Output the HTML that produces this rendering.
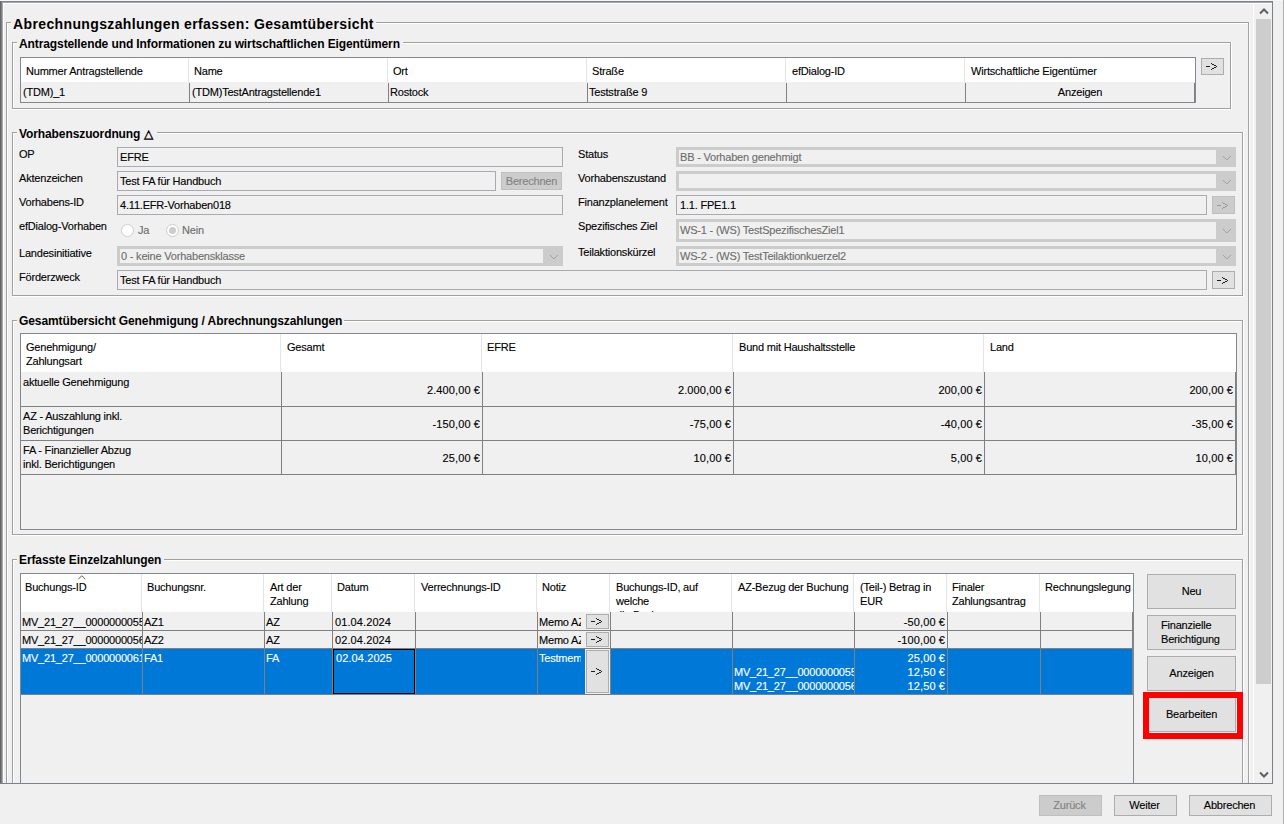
<!DOCTYPE html>
<html><head><meta charset="utf-8"><title>Abrechnungszahlungen erfassen</title>
<style>
html,body{margin:0;padding:0;}
body{width:1284px;height:824px;overflow:hidden;background:#f0f0f0;position:relative;font-family:"Liberation Sans",sans-serif;}
body div, body span, body svg{position:absolute;}
.t{font:11px/13px "Liberation Sans",sans-serif;letter-spacing:-0.2px;white-space:nowrap;color:#000;-webkit-text-stroke:0.12px currentColor;}
.b12{font:bold 12px/14px "Liberation Sans",sans-serif;letter-spacing:-0.1px;white-space:nowrap;color:#000;}
.b14{font:bold 14px/16px "Liberation Sans",sans-serif;letter-spacing:0.37px;white-space:nowrap;color:#000;}
.n{letter-spacing:0.1px;}
.dis{color:#6d6d6d;}
.dis2{color:#838383;}
.w{color:#fff;}
.clip{overflow:hidden;}
</style></head><body>

<div style="left:0px;top:0px;width:1283px;height:1px;background:#f6f6f6"></div>
<div style="left:0px;top:1px;width:1273px;height:1px;background:#7f848b"></div>
<div style="left:1px;top:2px;width:1272px;height:1px;background:#a4a8ae"></div>
<div style="left:0px;top:1px;width:1px;height:783px;background:#666666"></div>
<div style="left:1px;top:1px;width:1px;height:783px;background:#7b8089"></div>
<div style="left:2px;top:2px;width:1px;height:782px;background:#a8a8a8"></div>
<div style="left:3px;top:3px;width:1269px;height:1px;background:#ffffff"></div>
<div style="left:3px;top:3px;width:1px;height:780px;background:#ffffff"></div>
<div style="left:1272px;top:1px;width:1px;height:783px;background:#7b8089"></div>
<div style="left:0px;top:783px;width:1273px;height:1px;background:#7b8089"></div>
<div style="left:1283px;top:0px;width:1px;height:824px;background:#b0b0b0"></div>
<div style="left:7px;top:23px;width:1243px;height:1px;background:#ffffff"></div>
<div style="left:7px;top:23px;width:1px;height:779px;background:#ffffff"></div>
<div style="left:1249px;top:22px;width:1px;height:780px;background:#ffffff"></div>
<div style="left:6px;top:801px;width:1244px;height:1px;background:#ffffff"></div>
<div style="left:6px;top:22px;width:1243px;height:1px;background:#a0a0a0"></div>
<div style="left:6px;top:22px;width:1px;height:779px;background:#a0a0a0"></div>
<div style="left:1248px;top:22px;width:1px;height:779px;background:#a0a0a0"></div>
<div style="left:6px;top:800px;width:1243px;height:1px;background:#a0a0a0"></div>
<div style="left:11px;top:22px;width:365px;height:2px;background:#f0f0f0"></div>
<span class="b14" style="left:13px;top:16px;">Abrechnungszahlungen erfassen: Gesamtübersicht</span>
<div style="left:13px;top:43px;width:1219px;height:1px;background:#ffffff"></div>
<div style="left:13px;top:43px;width:1px;height:67px;background:#ffffff"></div>
<div style="left:1231px;top:42px;width:1px;height:68px;background:#ffffff"></div>
<div style="left:12px;top:109px;width:1220px;height:1px;background:#ffffff"></div>
<div style="left:12px;top:42px;width:1219px;height:1px;background:#a0a0a0"></div>
<div style="left:12px;top:42px;width:1px;height:67px;background:#a0a0a0"></div>
<div style="left:1230px;top:42px;width:1px;height:67px;background:#a0a0a0"></div>
<div style="left:12px;top:108px;width:1219px;height:1px;background:#a0a0a0"></div>
<div style="left:17px;top:42px;width:386px;height:2px;background:#f0f0f0"></div>
<span class="b12" style="left:19px;top:37px;">Antragstellende und Informationen zu wirtschaftlichen Eigentümern</span>
<div style="left:20px;top:57px;width:1176px;height:46px;box-sizing:border-box;border:1px solid #828790;background:#f0f0f0"></div>
<div style="left:21px;top:58px;width:1174px;height:24px;background:#ffffff"></div>
<div style="left:188px;top:58px;width:1px;height:24px;background:#e5e5e5"></div>
<div style="left:387px;top:58px;width:1px;height:24px;background:#e5e5e5"></div>
<div style="left:586px;top:58px;width:1px;height:24px;background:#e5e5e5"></div>
<div style="left:785px;top:58px;width:1px;height:24px;background:#e5e5e5"></div>
<div style="left:964px;top:58px;width:1px;height:24px;background:#e5e5e5"></div>
<div style="left:189px;top:83px;width:1px;height:19px;background:#808080"></div>
<div style="left:388px;top:83px;width:1px;height:19px;background:#808080"></div>
<div style="left:587px;top:83px;width:1px;height:19px;background:#808080"></div>
<div style="left:786px;top:83px;width:1px;height:19px;background:#808080"></div>
<div style="left:965px;top:83px;width:1px;height:19px;background:#808080"></div>
<div style="left:1194px;top:83px;width:1px;height:19px;background:#808080"></div>
<span class="t" style="left:26px;top:65px;">Nummer Antragstellende</span>
<span class="t" style="left:194px;top:65px;">Name</span>
<span class="t" style="left:393px;top:65px;">Ort</span>
<span class="t" style="left:592px;top:65px;">Straße</span>
<span class="t" style="left:792px;top:65px;">efDialog-ID</span>
<span class="t" style="left:971px;top:65px;">Wirtschaftliche Eigentümer</span>
<span class="t" style="left:23px;top:86px;">(TDM)_1</span>
<span class="t" style="left:192px;top:86px;">(TDM)TestAntragstellende1</span>
<span class="t" style="left:390px;top:86px;">Rostock</span>
<span class="t" style="left:589px;top:86px;">Teststraße 9</span>
<span class="t" style="left:966px;width:228px;text-align:center;top:86px;">Anzeigen</span>
<div style="left:1201px;top:58px;width:23px;height:17px;box-sizing:border-box;border:1px solid #adadad;background:#e1e1e1"></div>
<div style="left:1206px;top:66px;width:4px;height:1px;background:#1e1e1e"></div>
<div style="left:1211px;top:63px;width:1px;height:1px;background:#1e1e1e"></div>
<div style="left:1212px;top:64px;width:2px;height:1px;background:#1e1e1e"></div>
<div style="left:1214px;top:65px;width:2px;height:1px;background:#1e1e1e"></div>
<div style="left:1216px;top:66px;width:1px;height:1px;background:#1e1e1e"></div>
<div style="left:1214px;top:67px;width:2px;height:1px;background:#1e1e1e"></div>
<div style="left:1212px;top:68px;width:2px;height:1px;background:#1e1e1e"></div>
<div style="left:1211px;top:69px;width:1px;height:1px;background:#1e1e1e"></div>
<div style="left:13px;top:133px;width:1231px;height:1px;background:#ffffff"></div>
<div style="left:13px;top:133px;width:1px;height:164px;background:#ffffff"></div>
<div style="left:1243px;top:132px;width:1px;height:165px;background:#ffffff"></div>
<div style="left:12px;top:296px;width:1232px;height:1px;background:#ffffff"></div>
<div style="left:12px;top:132px;width:1231px;height:1px;background:#a0a0a0"></div>
<div style="left:12px;top:132px;width:1px;height:164px;background:#a0a0a0"></div>
<div style="left:1242px;top:132px;width:1px;height:164px;background:#a0a0a0"></div>
<div style="left:12px;top:295px;width:1231px;height:1px;background:#a0a0a0"></div>
<div style="left:17px;top:132px;width:140px;height:2px;background:#f0f0f0"></div>
<span class="b12" style="left:19px;top:127px;">Vorhabenszuordnung △</span>
<span class="t" style="left:19px;top:148px;">OP</span>
<span class="t" style="left:19px;top:172px;">Aktenzeichen</span>
<span class="t" style="left:19px;top:196px;">Vorhabens-ID</span>
<span class="t" style="left:19px;top:220px;">efDialog-Vorhaben</span>
<span class="t" style="left:19px;top:247px;">Landesinitiative</span>
<span class="t" style="left:19px;top:271px;">Förderzweck</span>
<div style="left:117px;top:147px;width:446px;height:20px;box-sizing:border-box;border:1px solid #a9abb3;background:#f0f0f0"></div>
<span class="t" style="left:120px;top:151px;">EFRE</span>
<div style="left:117px;top:171px;width:379px;height:20px;box-sizing:border-box;border:1px solid #a9abb3;background:#f0f0f0"></div>
<span class="t" style="left:120px;top:175px;">Test FA für Handbuch</span>
<div style="left:501px;top:172px;width:61px;height:18px;box-sizing:border-box;border:1px solid #bfbfbf;background:#cccccc"></div>
<span class="t dis2" style="left:501px;width:61px;text-align:center;top:175px;">Berechnen</span>
<div style="left:117px;top:195px;width:446px;height:20px;box-sizing:border-box;border:1px solid #a9abb3;background:#f0f0f0"></div>
<span class="t" style="left:120px;top:199px;">4.11.EFR-Vorhaben018</span>
<svg style="left:121px;top:224px" width="13" height="13" viewBox="0 0 13 13"><circle cx="6.5" cy="6.5" r="6" fill="#fff" stroke="#cccccc" stroke-width="1"/></svg>
<span class="t dis" style="left:138px;top:224px;">Ja</span>
<svg style="left:166px;top:224px" width="13" height="13" viewBox="0 0 13 13"><circle cx="6.5" cy="6.5" r="6" fill="#fff" stroke="#cccccc" stroke-width="1"/><circle cx="6.5" cy="6.5" r="3.5" fill="#cccccc"/></svg>
<span class="t dis" style="left:182px;top:224px;">Nein</span>
<div style="left:117px;top:246px;width:446px;height:20px;background:#cccccc"></div>
<div style="left:120px;top:249px;width:423px;height:14px;background:#f0f0f0"></div>
<svg style="left:549px;top:254px" width="10" height="7" viewBox="0 0 10 7"><path d="M0.9 1 L4.9 5 L8.9 1" fill="none" stroke="#a0a0a0" stroke-width="1"/></svg>
<span class="t dis" style="left:121px;top:250px;">0 - keine Vorhabensklasse</span>
<div style="left:117px;top:270px;width:1090px;height:20px;box-sizing:border-box;border:1px solid #a9abb3;background:#f0f0f0"></div>
<span class="t" style="left:120px;top:274px;">Test FA für Handbuch</span>
<div style="left:1212px;top:271px;width:23px;height:18px;box-sizing:border-box;border:1px solid #adadad;background:#e1e1e1"></div>
<div style="left:1217px;top:280px;width:4px;height:1px;background:#1e1e1e"></div>
<div style="left:1222px;top:277px;width:1px;height:1px;background:#1e1e1e"></div>
<div style="left:1223px;top:278px;width:2px;height:1px;background:#1e1e1e"></div>
<div style="left:1225px;top:279px;width:2px;height:1px;background:#1e1e1e"></div>
<div style="left:1227px;top:280px;width:1px;height:1px;background:#1e1e1e"></div>
<div style="left:1225px;top:281px;width:2px;height:1px;background:#1e1e1e"></div>
<div style="left:1223px;top:282px;width:2px;height:1px;background:#1e1e1e"></div>
<div style="left:1222px;top:283px;width:1px;height:1px;background:#1e1e1e"></div>
<span class="t" style="left:578px;top:148px;">Status</span>
<span class="t" style="left:578px;top:172px;">Vorhabenszustand</span>
<span class="t" style="left:578px;top:196px;">Finanzplanelement</span>
<span class="t" style="left:578px;top:220px;">Spezifisches Ziel</span>
<span class="t" style="left:578px;top:246px;">Teilaktionskürzel</span>
<div style="left:676px;top:147px;width:560px;height:20px;background:#cccccc"></div>
<div style="left:679px;top:150px;width:537px;height:14px;background:#f0f0f0"></div>
<svg style="left:1222px;top:155px" width="10" height="7" viewBox="0 0 10 7"><path d="M0.9 1 L4.9 5 L8.9 1" fill="none" stroke="#a0a0a0" stroke-width="1"/></svg>
<span class="t dis" style="left:680px;top:151px;">BB - Vorhaben genehmigt</span>
<div style="left:676px;top:171px;width:560px;height:20px;background:#cccccc"></div>
<div style="left:679px;top:174px;width:537px;height:14px;background:#f0f0f0"></div>
<svg style="left:1222px;top:179px" width="10" height="7" viewBox="0 0 10 7"><path d="M0.9 1 L4.9 5 L8.9 1" fill="none" stroke="#a0a0a0" stroke-width="1"/></svg>
<div style="left:676px;top:195px;width:531px;height:20px;box-sizing:border-box;border:1px solid #a9abb3;background:#f0f0f0"></div>
<span class="t" style="left:680px;top:199px;">1.1. FPE1.1</span>
<div style="left:1212px;top:196px;width:23px;height:18px;box-sizing:border-box;border:1px solid #bfbfbf;background:#cccccc"></div>
<div style="left:1217px;top:205px;width:4px;height:1px;background:#9a9a9a"></div>
<div style="left:1222px;top:202px;width:1px;height:1px;background:#9a9a9a"></div>
<div style="left:1223px;top:203px;width:2px;height:1px;background:#9a9a9a"></div>
<div style="left:1225px;top:204px;width:2px;height:1px;background:#9a9a9a"></div>
<div style="left:1227px;top:205px;width:1px;height:1px;background:#9a9a9a"></div>
<div style="left:1225px;top:206px;width:2px;height:1px;background:#9a9a9a"></div>
<div style="left:1223px;top:207px;width:2px;height:1px;background:#9a9a9a"></div>
<div style="left:1222px;top:208px;width:1px;height:1px;background:#9a9a9a"></div>
<div style="left:676px;top:219px;width:560px;height:23px;background:#cccccc"></div>
<div style="left:679px;top:222px;width:537px;height:17px;background:#f0f0f0"></div>
<svg style="left:1222px;top:228px" width="10" height="7" viewBox="0 0 10 7"><path d="M0.9 1 L4.9 5 L8.9 1" fill="none" stroke="#a0a0a0" stroke-width="1"/></svg>
<span class="t dis" style="left:680px;top:224px;">WS-1 - (WS) TestSpezifischesZiel1</span>
<div style="left:676px;top:246px;width:560px;height:20px;background:#cccccc"></div>
<div style="left:679px;top:249px;width:537px;height:14px;background:#f0f0f0"></div>
<svg style="left:1222px;top:254px" width="10" height="7" viewBox="0 0 10 7"><path d="M0.9 1 L4.9 5 L8.9 1" fill="none" stroke="#a0a0a0" stroke-width="1"/></svg>
<span class="t dis" style="left:680px;top:250px;">WS-2 - (WS) TestTeilaktionkuerzel2</span>
<div style="left:13px;top:321px;width:1231px;height:1px;background:#ffffff"></div>
<div style="left:13px;top:321px;width:1px;height:215px;background:#ffffff"></div>
<div style="left:1243px;top:320px;width:1px;height:216px;background:#ffffff"></div>
<div style="left:12px;top:535px;width:1232px;height:1px;background:#ffffff"></div>
<div style="left:12px;top:320px;width:1231px;height:1px;background:#a0a0a0"></div>
<div style="left:12px;top:320px;width:1px;height:215px;background:#a0a0a0"></div>
<div style="left:1242px;top:320px;width:1px;height:215px;background:#a0a0a0"></div>
<div style="left:12px;top:534px;width:1231px;height:1px;background:#a0a0a0"></div>
<div style="left:17px;top:320px;width:327px;height:2px;background:#f0f0f0"></div>
<span class="b12" style="left:19px;top:314px;">Gesamtübersicht Genehmigung / Abrechnungszahlungen</span>
<div style="left:20px;top:333px;width:1217px;height:197px;box-sizing:border-box;border:1px solid #828790;background:#f0f0f0"></div>
<div style="left:21px;top:334px;width:1215px;height:38px;background:#ffffff"></div>
<div style="left:280px;top:334px;width:1px;height:38px;background:#e5e5e5"></div>
<div style="left:481px;top:334px;width:1px;height:38px;background:#e5e5e5"></div>
<div style="left:732px;top:334px;width:1px;height:38px;background:#e5e5e5"></div>
<div style="left:983px;top:334px;width:1px;height:38px;background:#e5e5e5"></div>
<div style="left:281px;top:372px;width:1px;height:103px;background:#808080"></div>
<div style="left:482px;top:372px;width:1px;height:103px;background:#808080"></div>
<div style="left:733px;top:372px;width:1px;height:103px;background:#808080"></div>
<div style="left:984px;top:372px;width:1px;height:103px;background:#808080"></div>
<div style="left:1235px;top:372px;width:1px;height:103px;background:#808080"></div>
<div style="left:21px;top:406px;width:1215px;height:1px;background:#808080"></div>
<div style="left:21px;top:440px;width:1215px;height:1px;background:#808080"></div>
<div style="left:21px;top:474px;width:1215px;height:1px;background:#808080"></div>
<span class="t" style="left:26px;top:341px;">Genehmigung/</span>
<span class="t" style="left:26px;top:355px;">Zahlungsart</span>
<span class="t" style="left:287px;top:341px;">Gesamt</span>
<span class="t" style="left:487px;top:341px;">EFRE</span>
<span class="t" style="left:739px;top:341px;">Bund mit Haushaltsstelle</span>
<span class="t" style="left:990px;top:341px;">Land</span>
<span class="t" style="left:23px;top:376px;">aktuelle Genehmigung</span>
<span class="t" style="left:23px;top:410px;">AZ - Auszahlung inkl.</span>
<span class="t" style="left:23px;top:424px;">Berichtigungen</span>
<span class="t" style="left:23px;top:444px;">FA - Finanzieller Abzug</span>
<span class="t" style="left:23px;top:458px;">inkl. Berichtigungen</span>
<span class="t n" style="right:804px;top:384px;">2.400,00 €</span>
<span class="t n" style="right:553px;top:384px;">2.000,00 €</span>
<span class="t n" style="right:302px;top:384px;">200,00 €</span>
<span class="t n" style="right:51px;top:384px;">200,00 €</span>
<span class="t n" style="right:804px;top:418px;">-150,00 €</span>
<span class="t n" style="right:553px;top:418px;">-75,00 €</span>
<span class="t n" style="right:302px;top:418px;">-40,00 €</span>
<span class="t n" style="right:51px;top:418px;">-35,00 €</span>
<span class="t n" style="right:804px;top:452px;">25,00 €</span>
<span class="t n" style="right:553px;top:452px;">10,00 €</span>
<span class="t n" style="right:302px;top:452px;">5,00 €</span>
<span class="t n" style="right:51px;top:452px;">10,00 €</span>
<div style="left:13px;top:560px;width:1231px;height:1px;background:#ffffff"></div>
<div style="left:13px;top:560px;width:1px;height:342px;background:#ffffff"></div>
<div style="left:1243px;top:559px;width:1px;height:343px;background:#ffffff"></div>
<div style="left:12px;top:901px;width:1232px;height:1px;background:#ffffff"></div>
<div style="left:12px;top:559px;width:1231px;height:1px;background:#a0a0a0"></div>
<div style="left:12px;top:559px;width:1px;height:342px;background:#a0a0a0"></div>
<div style="left:1242px;top:559px;width:1px;height:342px;background:#a0a0a0"></div>
<div style="left:12px;top:900px;width:1231px;height:1px;background:#a0a0a0"></div>
<div style="left:17px;top:559px;width:147px;height:2px;background:#f0f0f0"></div>
<span class="b12" style="left:19px;top:553px;">Erfasste Einzelzahlungen</span>
<div style="left:20px;top:573px;width:1114px;height:328px;box-sizing:border-box;border:1px solid #828790;background:#f0f0f0"></div>
<div style="left:21px;top:574px;width:1112px;height:38px;background:#ffffff"></div>
<div style="left:141px;top:574px;width:1px;height:38px;background:#e5e5e5"></div>
<div style="left:263px;top:574px;width:1px;height:38px;background:#e5e5e5"></div>
<div style="left:331px;top:574px;width:1px;height:38px;background:#e5e5e5"></div>
<div style="left:414px;top:574px;width:1px;height:38px;background:#e5e5e5"></div>
<div style="left:536px;top:574px;width:1px;height:38px;background:#e5e5e5"></div>
<div style="left:609px;top:574px;width:1px;height:38px;background:#e5e5e5"></div>
<div style="left:731px;top:574px;width:1px;height:38px;background:#e5e5e5"></div>
<div style="left:853px;top:574px;width:1px;height:38px;background:#e5e5e5"></div>
<div style="left:946px;top:574px;width:1px;height:38px;background:#e5e5e5"></div>
<div style="left:1039px;top:574px;width:1px;height:38px;background:#e5e5e5"></div>
<div style="left:21px;top:649px;width:1112px;height:45px;background:#0078d7"></div>
<div style="left:142px;top:612px;width:1px;height:83px;background:#808080"></div>
<div style="left:264px;top:612px;width:1px;height:83px;background:#808080"></div>
<div style="left:332px;top:612px;width:1px;height:83px;background:#808080"></div>
<div style="left:415px;top:612px;width:1px;height:83px;background:#808080"></div>
<div style="left:537px;top:612px;width:1px;height:83px;background:#808080"></div>
<div style="left:610px;top:612px;width:1px;height:83px;background:#808080"></div>
<div style="left:732px;top:612px;width:1px;height:83px;background:#808080"></div>
<div style="left:854px;top:612px;width:1px;height:83px;background:#808080"></div>
<div style="left:947px;top:612px;width:1px;height:83px;background:#808080"></div>
<div style="left:1040px;top:612px;width:1px;height:83px;background:#808080"></div>
<div style="left:1132px;top:612px;width:1px;height:83px;background:#808080"></div>
<div style="left:21px;top:630px;width:1112px;height:1px;background:#808080"></div>
<div style="left:21px;top:648px;width:1112px;height:1px;background:#808080"></div>
<div style="left:21px;top:694px;width:1112px;height:1px;background:#808080"></div>
<svg style="left:77px;top:575px" width="10" height="5" viewBox="0 0 10 5"><path d="M1.3 4.2 L4.8 0.7 L8.3 4.2" fill="none" stroke="#5a5a5a" stroke-width="1"/></svg>
<span class="t" style="left:25px;top:581px;">Buchungs-ID</span>
<span class="t" style="left:147px;top:581px;">Buchungsnr.</span>
<span class="t" style="left:270px;top:581px;">Art der</span>
<span class="t" style="left:270px;top:595px;">Zahlung</span>
<span class="t" style="left:337px;top:581px;">Datum</span>
<span class="t" style="left:421px;top:581px;">Verrechnungs-ID</span>
<span class="t" style="left:542px;top:581px;">Notiz</span>
<div class="clip" style="left:611px;top:574px;width:120px;height:38px">
<span class="t" style="left:5px;top:7px;">Buchungs-ID, auf</span>
<span class="t" style="left:5px;top:21px;">welche</span>
<span class="t" style="left:5px;top:35px;">die Buchung</span>
</div>
<span class="t" style="left:738px;top:581px;">AZ-Bezug der Buchung</span>
<span class="t" style="left:860px;top:581px;">(Teil-) Betrag in</span>
<span class="t" style="left:860px;top:595px;">EUR</span>
<span class="t" style="left:952px;top:581px;">Finaler</span>
<span class="t" style="left:952px;top:595px;">Zahlungsantrag</span>
<span class="t" style="left:1045px;top:581px;">Rechnungslegung</span>
<div class="clip" style="left:22px;top:616px;width:120px;height:14px">
<span class="t" style="left:0;top:0">MV_21_27__0000000055</span>
</div>
<span class="t" style="left:144px;top:616px;">AZ1</span>
<span class="t" style="left:266px;top:616px;">AZ</span>
<span class="t n" style="left:335px;top:616px;">01.04.2024</span>
<div class="clip" style="left:539px;top:616px;width:42px;height:14px">
<span class="t" style="left:0;top:0">Memo AZ1</span>
</div>
<div style="left:586px;top:614px;width:23px;height:15px;box-sizing:border-box;border:1px solid #adadad;background:#e1e1e1"></div>
<div style="left:591px;top:621px;width:4px;height:1px;background:#1e1e1e"></div>
<div style="left:596px;top:618px;width:1px;height:1px;background:#1e1e1e"></div>
<div style="left:597px;top:619px;width:2px;height:1px;background:#1e1e1e"></div>
<div style="left:599px;top:620px;width:2px;height:1px;background:#1e1e1e"></div>
<div style="left:601px;top:621px;width:1px;height:1px;background:#1e1e1e"></div>
<div style="left:599px;top:622px;width:2px;height:1px;background:#1e1e1e"></div>
<div style="left:597px;top:623px;width:2px;height:1px;background:#1e1e1e"></div>
<div style="left:596px;top:624px;width:1px;height:1px;background:#1e1e1e"></div>
<span class="t n" style="right:339px;top:616px;">-50,00 €</span>
<div class="clip" style="left:22px;top:634px;width:120px;height:14px">
<span class="t" style="left:0;top:0">MV_21_27__0000000056</span>
</div>
<span class="t" style="left:144px;top:634px;">AZ2</span>
<span class="t" style="left:266px;top:634px;">AZ</span>
<span class="t n" style="left:335px;top:634px;">02.04.2024</span>
<div class="clip" style="left:539px;top:634px;width:42px;height:14px">
<span class="t" style="left:0;top:0">Memo AZ2</span>
</div>
<div style="left:586px;top:632px;width:23px;height:15px;box-sizing:border-box;border:1px solid #adadad;background:#e1e1e1"></div>
<div style="left:591px;top:639px;width:4px;height:1px;background:#1e1e1e"></div>
<div style="left:596px;top:636px;width:1px;height:1px;background:#1e1e1e"></div>
<div style="left:597px;top:637px;width:2px;height:1px;background:#1e1e1e"></div>
<div style="left:599px;top:638px;width:2px;height:1px;background:#1e1e1e"></div>
<div style="left:601px;top:639px;width:1px;height:1px;background:#1e1e1e"></div>
<div style="left:599px;top:640px;width:2px;height:1px;background:#1e1e1e"></div>
<div style="left:597px;top:641px;width:2px;height:1px;background:#1e1e1e"></div>
<div style="left:596px;top:642px;width:1px;height:1px;background:#1e1e1e"></div>
<span class="t n" style="right:339px;top:634px;">-100,00 €</span>
<div class="clip" style="left:22px;top:652px;width:120px;height:14px">
<span class="t w" style="left:0;top:0">MV_21_27__0000000061</span>
</div>
<span class="t w" style="left:144px;top:652px;">FA1</span>
<span class="t w" style="left:266px;top:652px;">FA</span>
<div style="left:333px;top:649px;width:82px;height:45px;box-sizing:border-box;border:1px solid #000"></div>
<span class="t w n" style="left:336px;top:652px;">02.04.2025</span>
<div class="clip" style="left:539px;top:652px;width:42px;height:14px">
<span class="t w" style="left:0;top:0">Testmemo</span>
</div>
<div style="left:585px;top:649px;width:25px;height:45px;background:#f0f0f0"></div>
<div style="left:586px;top:650px;width:23px;height:43px;box-sizing:border-box;border:1px solid #adadad;background:#e1e1e1"></div>
<div style="left:591px;top:671px;width:4px;height:1px;background:#1e1e1e"></div>
<div style="left:596px;top:668px;width:1px;height:1px;background:#1e1e1e"></div>
<div style="left:597px;top:669px;width:2px;height:1px;background:#1e1e1e"></div>
<div style="left:599px;top:670px;width:2px;height:1px;background:#1e1e1e"></div>
<div style="left:601px;top:671px;width:1px;height:1px;background:#1e1e1e"></div>
<div style="left:599px;top:672px;width:2px;height:1px;background:#1e1e1e"></div>
<div style="left:597px;top:673px;width:2px;height:1px;background:#1e1e1e"></div>
<div style="left:596px;top:674px;width:1px;height:1px;background:#1e1e1e"></div>
<div class="clip" style="left:734px;top:666px;width:120px;height:14px">
<span class="t w" style="left:0;top:0">MV_21_27__0000000055</span>
</div>
<div class="clip" style="left:734px;top:680px;width:120px;height:14px">
<span class="t w" style="left:0;top:0">MV_21_27__0000000056</span>
</div>
<span class="t w n" style="right:339px;top:652px;">25,00 €</span>
<span class="t w n" style="right:339px;top:666px;">12,50 €</span>
<span class="t w n" style="right:339px;top:680px;">12,50 €</span>
<div style="left:1147px;top:574px;width:89px;height:35px;box-sizing:border-box;border:1px solid #adadad;background:#e1e1e1"></div>
<span class="t" style="left:1147px;width:89px;text-align:center;top:585px;">Neu</span>
<div style="left:1147px;top:615px;width:89px;height:35px;box-sizing:border-box;border:1px solid #adadad;background:#e1e1e1"></div>
<span class="t" style="left:1161px;top:619px;">Finanzielle</span>
<span class="t" style="left:1161px;top:633px;">Berichtigung</span>
<div style="left:1147px;top:656px;width:89px;height:35px;box-sizing:border-box;border:1px solid #adadad;background:#e1e1e1"></div>
<span class="t" style="left:1147px;width:89px;text-align:center;top:667px;">Anzeigen</span>
<div style="left:1147px;top:697px;width:89px;height:35px;box-sizing:border-box;border:1px solid #adadad;background:#e1e1e1"></div>
<span class="t" style="left:1147px;width:89px;text-align:center;top:708px;">Bearbeiten</span>
<div style="left:1143px;top:692px;width:100px;height:47px;box-sizing:border-box;border:6px solid #ff0000"></div>
<div style="left:1253px;top:3px;width:1px;height:780px;background:#ffffff"></div>
<div style="left:1255px;top:4px;width:17px;height:779px;background:#f0f0f0"></div>
<div style="left:1256px;top:19px;width:15px;height:665px;background:#cdcdcd"></div>
<svg style="left:1259px;top:7px" width="10" height="8" viewBox="0 0 10 8"><path d="M1 6.5 L5 2.5 L9 6.5" fill="none" stroke="#606060" stroke-width="2"/></svg>
<svg style="left:1259px;top:771px" width="10" height="8" viewBox="0 0 10 8"><path d="M1 1.5 L5 5.5 L9 1.5" fill="none" stroke="#606060" stroke-width="2"/></svg>
<div style="left:0px;top:784px;width:1283px;height:40px;background:#f0f0f0"></div>
<div style="left:1039px;top:795px;width:63px;height:21px;box-sizing:border-box;border:1px solid #bfbfbf;background:#cccccc"></div>
<span class="t dis2" style="left:1038px;width:63px;text-align:center;top:799px;">Zurück</span>
<div style="left:1114px;top:795px;width:63px;height:21px;box-sizing:border-box;border:1px solid #adadad;background:#e1e1e1"></div>
<span class="t" style="left:1113px;width:63px;text-align:center;top:799px;">Weiter</span>
<div style="left:1189px;top:795px;width:83px;height:21px;box-sizing:border-box;border:1px solid #adadad;background:#e1e1e1"></div>
<span class="t" style="left:1188px;width:83px;text-align:center;top:799px;">Abbrechen</span>
<div style="left:0px;top:783px;width:1273px;height:1px;background:#7b8089"></div>
<div style="left:1272px;top:1px;width:1px;height:783px;background:#7b8089"></div>
</body></html>
